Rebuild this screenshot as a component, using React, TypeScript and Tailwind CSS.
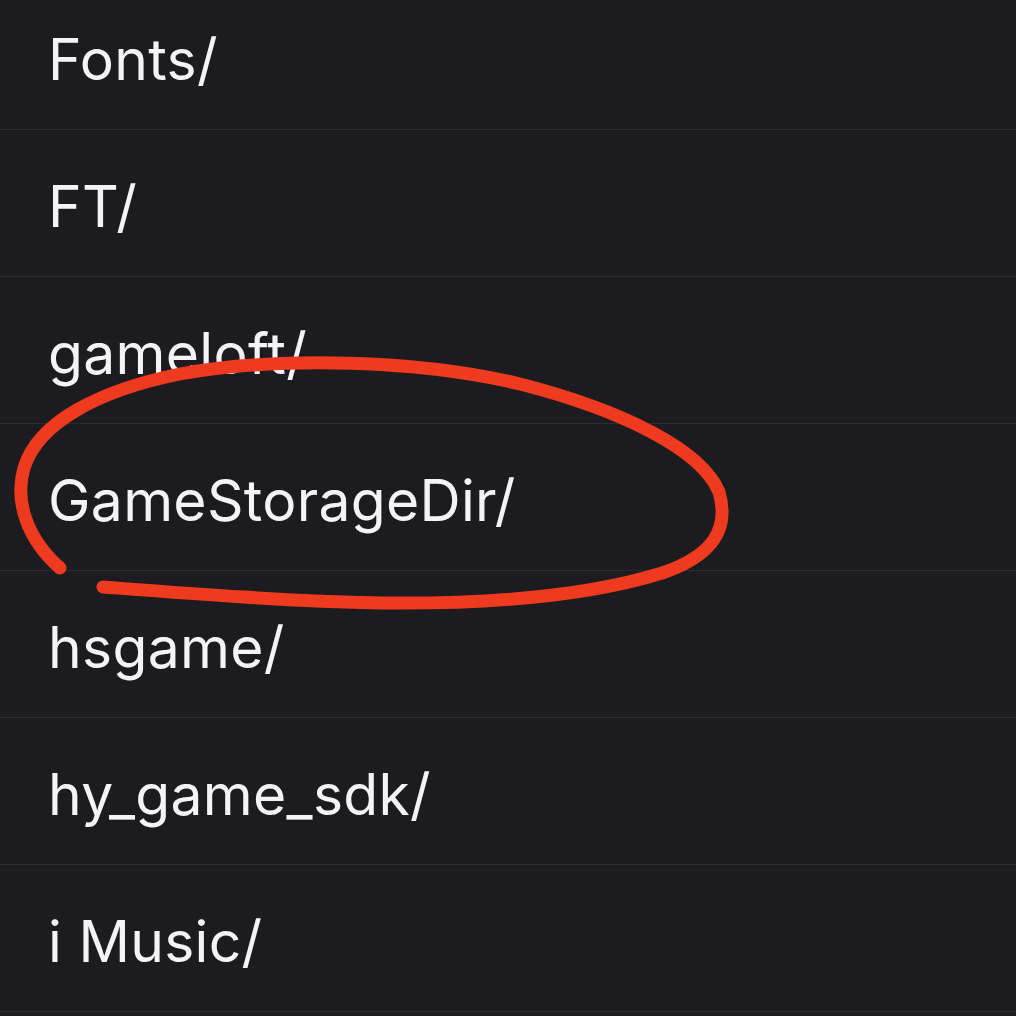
import React from "react";

const items = ["Fonts/", "FT/", "gameloft/", "GameStorageDir/", "hsgame/", "hy_game_sdk/", "i Music/"];

export default function App() {
  return (
    <div className="relative w-[1016px] h-[1016px] overflow-hidden bg-[#1c1b20]" style={{ fontFamily: "Inter, 'Noto Sans', sans-serif" }}>
      <div className="flex flex-col mt-[-17px]">
        {items.map((t) => (
          <div key={t} className="h-[147px] shrink-0 flex items-center pl-[48px] pt-[6px] border-b border-[#2c2b30]">
            <span className="text-[57px] text-[#f4f3f8] tracking-[0.3px] leading-none">{t}</span>
          </div>
        ))}
      </div>
      <svg className="absolute inset-0 pointer-events-none" width="1016" height="1016" viewBox="0 0 1016 1016">
        <path
          d="M 60 568 C 28 540, 14 502, 24 468 C 38 422, 100 390, 180 374 C 280 356, 420 360, 520 384 C 622 410, 702 450, 719 492 C 730 530, 712 556, 662 573 C 582 598, 482 604, 382 603 C 282 601, 182 593, 103 587"
          fill="none"
          stroke="#ee3a1e"
          strokeWidth="13"
          strokeLinecap="round"
          strokeLinejoin="round"
        />
      </svg>
    </div>
  );
}
